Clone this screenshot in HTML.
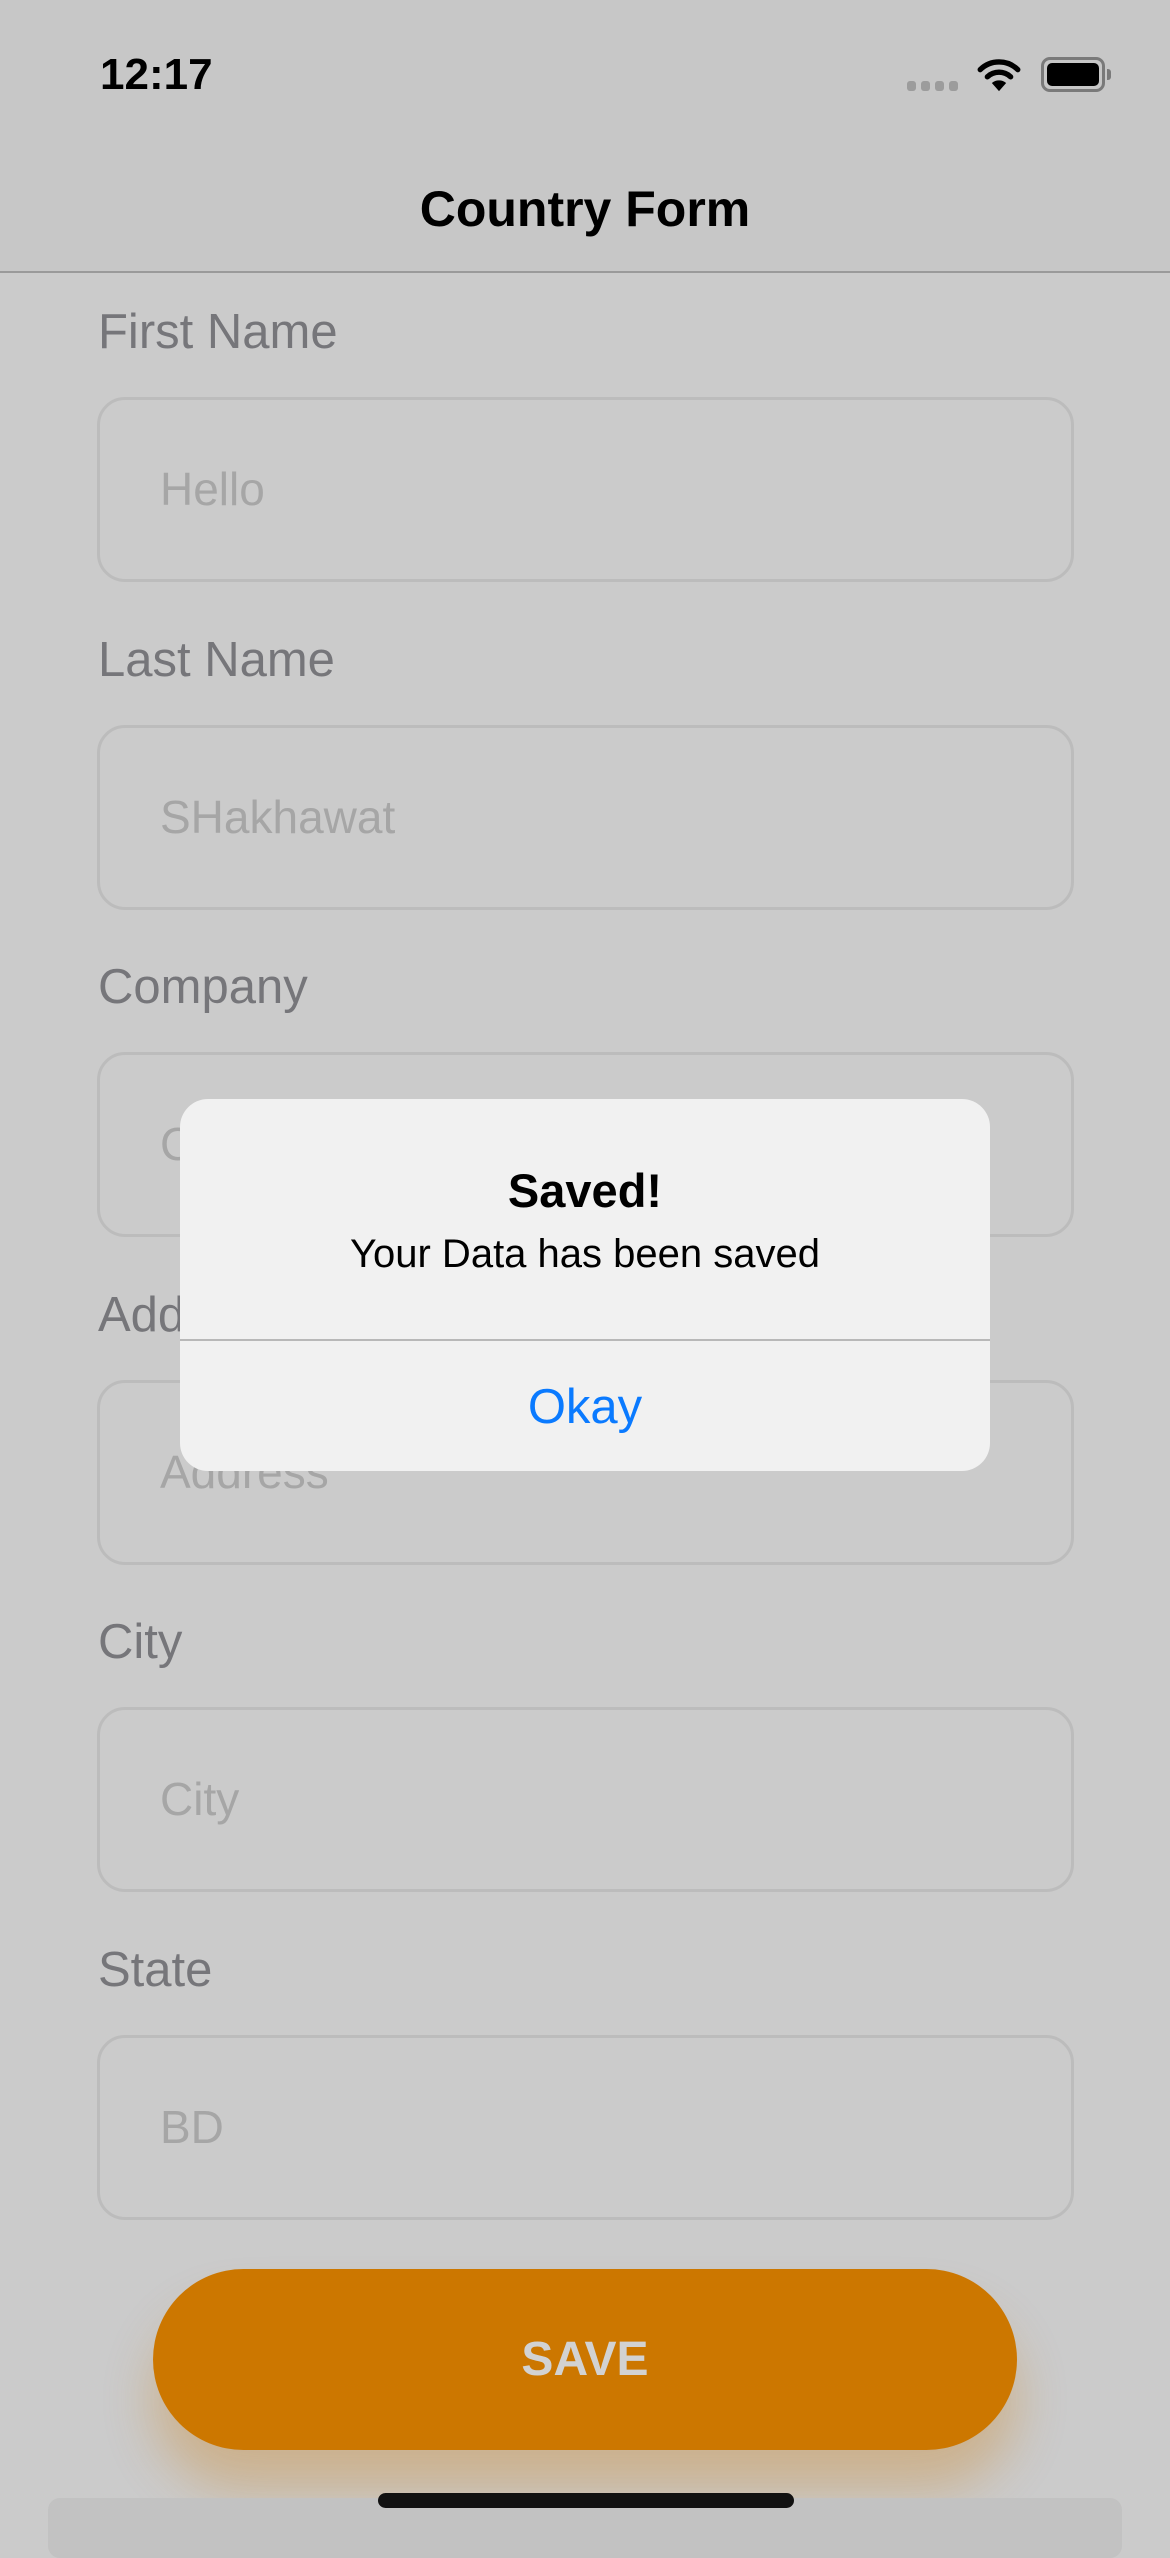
<!DOCTYPE html>
<html><head><meta charset="utf-8"><style>
*{margin:0;padding:0;box-sizing:border-box}
body{width:1170px;height:2532px;background:#cbcbcb;position:relative;overflow:hidden;font-family:"Liberation Sans",sans-serif}
.t{position:absolute;line-height:1;white-space:nowrap}
.nav{position:absolute;left:0;top:0;width:1170px;height:273px;background:#c7c7c7;border-bottom:2px solid #9a9a9a}
.lab{position:absolute;left:98px;font-size:49px;color:#76767a;line-height:1}
.fld{position:absolute;left:97px;width:977px;height:185px;border:3px solid #bcbcbc;border-radius:28px}
.ph{position:absolute;left:60px;top:66px;font-size:46px;color:#a6a6a6;line-height:1}
</style></head><body>
<div class="nav"></div>
<div class="t" style="left:100px;top:53px;font-size:44px;font-weight:bold;color:#000">12:17</div>
<div style="position:absolute;left:907px;top:81px;width:52px;height:10px">
<span style="position:absolute;left:0;width:9px;height:10px;border-radius:3px;background:#9c9c9c"></span>
<span style="position:absolute;left:14px;width:9px;height:10px;border-radius:3px;background:#9c9c9c"></span>
<span style="position:absolute;left:28px;width:9px;height:10px;border-radius:3px;background:#9c9c9c"></span>
<span style="position:absolute;left:42px;width:9px;height:10px;border-radius:3px;background:#9c9c9c"></span>
</div>
<svg style="position:absolute;left:976px;top:58px" width="46" height="34" viewBox="0 0 50 38">
<path d="M4 13 A30 30 0 0 1 46 13" stroke="#000" stroke-width="6" fill="none" stroke-linecap="round"/>
<path d="M12 21 A19 19 0 0 1 38 21" stroke="#000" stroke-width="6" fill="none" stroke-linecap="round"/>
<path d="M17 28 L25 37 L33 28 A12 12 0 0 0 17 28Z" fill="#000"/>
</svg>
<div style="position:absolute;left:1041px;top:57px;width:64px;height:35px;border:3px solid #7a7a7a;border-radius:9px;padding:3px"><div style="width:100%;height:100%;background:#000;border-radius:5px"></div></div>
<div style="position:absolute;left:1107px;top:69px;width:4px;height:11px;background:#7a7a7a;border-radius:0 3px 3px 0"></div>
<div class="t" style="left:0;width:1170px;text-align:center;top:184px;font-size:50px;font-weight:bold;color:#000">Country Form</div>

<div class="lab" style="top:308px">First Name</div>
<div class="fld" style="top:397px"><div class="ph">Hello</div></div>
<div class="lab" style="top:636px">Last Name</div>
<div class="fld" style="top:725px"><div class="ph">SHakhawat</div></div>
<div class="lab" style="top:963px">Company</div>
<div class="fld" style="top:1052px"><div class="ph">Company</div></div>
<div class="lab" style="top:1291px">Address</div>
<div class="fld" style="top:1380px"><div class="ph">Address</div></div>
<div class="lab" style="top:1618px">City</div>
<div class="fld" style="top:1707px"><div class="ph">City</div></div>
<div class="lab" style="top:1946px">State</div>
<div class="fld" style="top:2035px"><div class="ph">BD</div></div>

<div style="position:absolute;left:153px;top:2269px;width:864px;height:181px;border-radius:91px;background:#cc7700;box-shadow:0 40px 50px rgba(204,119,0,0.3)"></div>
<div class="t" style="left:153px;width:864px;text-align:center;top:2336px;font-size:48px;font-weight:bold;color:#d2d2d2">SAVE</div>
<div style="position:absolute;left:48px;top:2498px;width:1074px;height:60px;background:#c2c2c2;border-radius:12px"></div>
<div style="position:absolute;left:378px;top:2493px;width:416px;height:15px;background:#111;border-radius:8px"></div>

<div style="position:absolute;left:180px;top:1099px;width:810px;height:372px;background:#f1f1f1;border-radius:28px;overflow:hidden">
<div style="position:absolute;left:0;top:240px;width:810px;height:2px;background:#b8b8b8"></div>
</div>
<div class="t" style="left:180px;width:810px;text-align:center;top:1167px;font-size:47px;font-weight:bold;color:#000">Saved!</div>
<div class="t" style="left:180px;width:810px;text-align:center;top:1234px;font-size:40px;color:#000">Your Data has been saved</div>
<div class="t" style="left:180px;width:810px;text-align:center;top:1383px;font-size:49px;color:#0a7aff">Okay</div>
</body></html>
